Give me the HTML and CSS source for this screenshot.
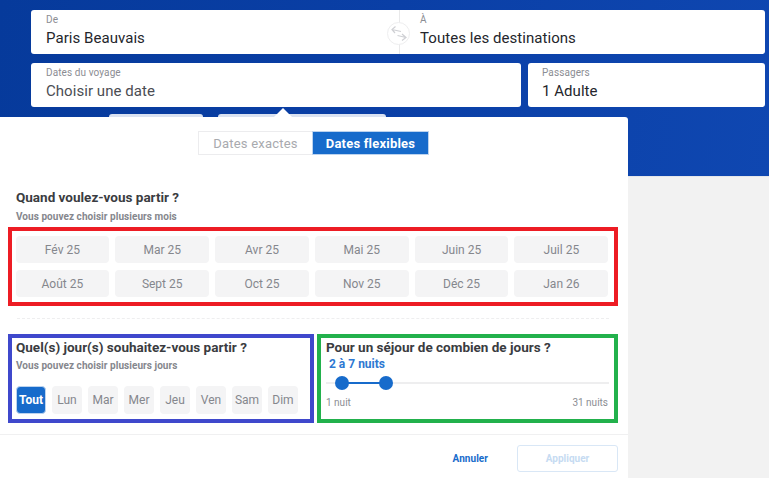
FILE: index.html
```html
<!DOCTYPE html>
<html lang="fr">
<head>
<meta charset="utf-8">
<title>Recherche de vols</title>
<link rel="stylesheet" href="styles.css">
</head>
<body>
<div class="page">
  <header class="hero">
    <div class="route">
      <div class="field field-half"><span class="label">De</span><span class="value">Paris Beauvais</span></div>
      <div class="field field-half field-to"><span class="label">À</span><span class="value">Toutes les destinations</span></div>
      <span class="swap">
        <svg width="21" height="21" viewBox="0 0 21 21" fill="none" stroke="#cfd0d4" stroke-width="1.200"><path d="M7.500 3.500 4 6.500l3 3.500M4 6.500 13 8.500M14 11l4 3.500-4 3M18 14.500 9.500 12.500"/></svg>
      </span>
    </div>
    <div class="trip">
      <div class="field field-dates"><span class="label">Dates du voyage</span><span class="value value-muted">Choisir une date</span></div>
      <div class="field field-pax"><span class="label">Passagers</span><span class="value">1 Adulte</span></div>
    </div>
    <div class="peek"><span class="peek-a"></span><span class="peek-b"></span></div>
  </header>

  <section class="panel">
    <span class="caret"></span>
    <div class="tabs">
      <span class="tab">Dates exactes</span>
      <span class="tab tab-on">Dates flexibles</span>
    </div>
    <div class="intro">
      <h2 class="title">Quand voulez-vous partir ?</h2>
      <p class="hint">Vous pouvez choisir plusieurs mois</p>
    </div>
    <div class="box box-red months">
      <span class="chip">Fév 25</span><span class="chip">Mar 25</span><span class="chip">Avr 25</span><span class="chip">Mai 25</span><span class="chip">Juin 25</span><span class="chip">Juil 25</span>
      <span class="chip">Août 25</span><span class="chip">Sept 25</span><span class="chip">Oct 25</span><span class="chip">Nov 25</span><span class="chip">Déc 25</span><span class="chip">Jan 26</span>
    </div>
    <div class="dash"></div>
    <div class="pair">
      <div class="box box-blue days-box">
        <h2 class="title">Quel(s) jour(s) souhaitez-vous partir ?</h2>
        <p class="hint hint-days">Vous pouvez choisir plusieurs jours</p>
        <div class="days">
          <span class="day day-on">Tout</span><span class="day">Lun</span><span class="day">Mar</span><span class="day">Mer</span><span class="day">Jeu</span><span class="day">Ven</span><span class="day">Sam</span><span class="day">Dim</span>
        </div>
      </div>
      <div class="box box-green stay-box">
        <h2 class="title">Pour un séjour de combien de jours ?</h2>
        <div class="range-label">2 à 7 nuits</div>
        <div class="slider">
          <span class="fill"></span>
          <span class="knob knob-a"></span>
          <span class="knob knob-b"></span>
        </div>
        <div class="ends"><span>1 nuit</span><span>31 nuits</span></div>
      </div>
    </div>
    <footer class="foot">
      <span class="cancel">Annuler</span>
      <span class="apply">Appliquer</span>
    </footer>
  </section>
</div>
</body>
</html>
```
FILE: styles.css
```css
* { box-sizing: border-box; }
html, body { margin: 0; padding: 0; }
body {
  width: 769px;
  height: 478px;
  overflow: hidden;
  background: #f2f2f2;
  font-family: Roboto, "Liberation Sans", sans-serif;
  color: #2b2d33;
}
.page { position: relative; width: 769px; height: 478px; overflow: hidden; }
.hero {
  height: 177px;
  padding: 10px 4px 0 31px;
  background: linear-gradient(100deg, #063a9b 0%, #0a3fa6 50%, #0f47b1 100%);
  border-bottom: 1px solid #e4e6ea;
}
.route { position: relative; display: flex; height: 44px; gap: 0; }
.field {
  display: flex;
  flex-direction: column;
  height: 44px;
  padding: 4px 15px 0;
  background: #fff;
  border-radius: 3px;
}
.field-half { width: 368px; border-radius: 3px 0 0 3px; }
.field-to { width: 366px; padding-left: 20px; border-left: 1px solid #e9e9ea; border-radius: 0 3px 3px 0; }
.label { font-size: 10px; line-height: 12px; color: #8b8d93; letter-spacing: .1px; }
.value { font-size: 15px; line-height: 22px; margin-top: 1px; color: #24262c; letter-spacing: .05px; }
.value-muted { color: #4b4d53; }
.swap {
  position: absolute;
  left: 356px;
  top: 12px;
  width: 23px;
  height: 23px;
  border-radius: 50%;
  background: #fff;
  border: 1px solid #eeeeef;
  display: flex;
  align-items: center;
  justify-content: center;
}
.trip { display: flex; gap: 7px; margin-top: 9px; }
.field-dates { width: 490px; }
.field-pax { width: 237px; padding-left: 14px; }
.peek { display: flex; gap: 15px; margin: 7px 0 0 78px; }
.peek-a, .peek-b { height: 3px; background: #fff; border-radius: 3px 3px 0 0; opacity: .85; }
.peek-a { width: 94px; }
.peek-b { width: 168px; }
.panel {
  position: absolute;
  left: 0;
  top: 117px;
  width: 628px;
  height: 361px;
  background: #fff;
  border-top-right-radius: 3px;
  display: flex;
  flex-direction: column;
}
.caret {
  position: absolute;
  left: 274px;
  top: -9px;
  width: 0;
  height: 0;
  border-left: 9px solid transparent;
  border-right: 9px solid transparent;
  border-bottom: 9px solid #fff;
}
.tabs { display: flex; margin: 14px 0 0 198px; height: 24px; }
.tab {
  display: flex;
  align-items: center;
  justify-content: center;
  width: 114px;
  font-size: 13px;
  color: #a8aaae;
  border: 1px solid #ececee;
  border-right: 0;
  letter-spacing: .2px;
}
.tab-on {
  width: 117px;
  background: #176bcb;
  border: 1px solid #bcd3ee;
  color: #fff;
  font-weight: 700;
}
.intro { margin: 0 0 0 16px; padding-top: 33px; }
.title { margin: 0; font-size: 13.500px; line-height: 18px; font-weight: 700; color: #3a3c41; }
.hint { margin: 4px 0 0; font-size: 10px; line-height: 14px; font-weight: 700; color: #85878d; letter-spacing: .05px; }
.hint-days { margin-top: 3px; }
.box { background: #fff; }
.box-red { border: 4.500px solid #ed1c24; }
.box-blue { border: 4px solid #3f48cc; }
.box-green { border: 4px solid #22b14c; }
.months {
  margin: 3px 0 0 8px;
  width: 610px;
  height: 79px;
  padding: 5px 5px 0 3.500px;
  display: grid;
  grid-template-columns: repeat(6, 93.800px);
  grid-auto-rows: 27px;
  column-gap: 6px;
  row-gap: 7px;
}
.chip {
  display: flex;
  align-items: center;
  justify-content: center;
  background: #f4f4f5;
  border-radius: 4px;
  font-size: 12px;
  color: #85878d;
}
.dash { margin: 12px 0 0 17px; width: 592px; border-top: 1px dashed #eeeeef; }
.pair { display: flex; gap: 3px; margin: 15px 0 0 8px; }
.days-box { width: 306px; height: 89px; padding: 0 0 0 4px; }
.stay-box { width: 301px; height: 89px; padding: 0 0 0 5px; }
.days { display: flex; gap: 6px; margin-top: 13px; }
.day {
  display: flex;
  align-items: center;
  justify-content: center;
  width: 30px;
  height: 28px;
  background: #f4f4f5;
  border-radius: 4px;
  font-size: 12px;
  color: #85878d;
}
.day-on { background: #176bcb; color: #fff; font-weight: 700; border: 1px solid #bcd3ee; }
.range-label { margin: 1px 0 0 3px; font-size: 12px; line-height: 15px; font-weight: 700; color: #2d78d2; }
.slider { position: relative; height: 2px; margin-top: 10px; background: #eeeeef; width: 283px; }
.fill { position: absolute; left: 15px; top: 0; width: 44px; height: 2px; background: #176bcb; }
.knob { position: absolute; top: -6px; width: 14px; height: 14px; border-radius: 50%; background: #176bcb; }
.knob-a { left: 9px; }
.knob-b { left: 53px; }
.ends { display: flex; justify-content: space-between; width: 282px; margin-top: 13px; font-size: 10px; line-height: 12px; color: #8b8d93; }
.foot {
  display: flex;
  align-items: center;
  justify-content: flex-end;
  gap: 29px;
  margin-top: 11px;
  padding: 4px 10px 0 0;
  height: 44px;
  border-top: 1px solid #f0f0f1;
}
.cancel { font-size: 10px; font-weight: 700; color: #176bcb; letter-spacing: .05px; }
.apply {
  display: flex;
  align-items: center;
  justify-content: center;
  width: 101px;
  height: 27px;
  border: 1px solid #d9e7f6;
  border-radius: 3px;
  font-size: 10px;
  font-weight: 700;
  color: #c6dbf2;
}
```
